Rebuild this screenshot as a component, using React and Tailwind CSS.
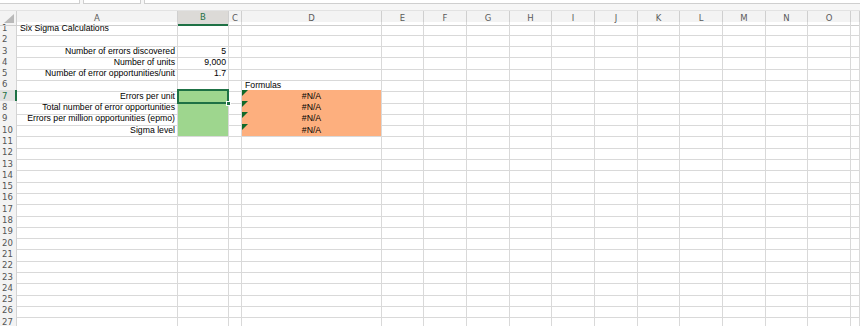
import React from 'react';

const COLS = ['A', 'B', 'C', 'D', 'E', 'F', 'G', 'H', 'I', 'J', 'K', 'L', 'M', 'N', 'O', 'P'];
const GRID = 'grid grid-cols-[17px_161px_51px_13px_140px_42px_43px_43px_42px_43px_43px_42px_43px_43px_42px_43px_1fr]';

const labels = {
    1: { A: { text: 'Six Sigma Calculations', align: 'left' } },
    3: { A: { text: 'Number of errors discovered' }, B: { text: '5' } },
    4: { A: { text: 'Number of units' }, B: { text: '9,000' } },
    5: { A: { text: 'Number of error opportunities/unit' }, B: { text: '1.7' } },
    6: { D: { text: 'Formulas', align: 'left' } },
    7: { A: { text: 'Errors per unit' }, D: { text: '#N/A', align: 'center' } },
    8: { A: { text: 'Total number of error opportunities' }, D: { text: '#N/A', align: 'center' } },
    9: { A: { text: 'Errors per million opportunities (epmo)' }, D: { text: '#N/A', align: 'center' } },
    10: { A: { text: 'Sigma level' }, D: { text: '#N/A', align: 'center' } },
};

function Cell({ row, col }) {
    const data = labels[row]?.[col];
    const green = col === 'B' && row >= 7 && row <= 10;
    const orange = col === 'D' && row >= 7 && row <= 10;
    const selected = col === 'B' && row === 7;
    const align = data?.align === 'left' ? 'justify-start pl-[3px]' : data?.align === 'center' ? 'justify-center' : 'justify-end pr-[2px]';

    let bg = 'border-r border-b border-[#d9d9d9]';
    if (green) bg = 'bg-[#9ed68e] border-r border-r-[#d9d9d9] border-b border-b-[#9ed68e]';
    if (orange) bg = 'bg-[#fdaf7e] border-r border-r-[#d9d9d9] border-b border-b-[#fdaf7e]';
    if (row === 10 && (green || orange)) bg = bg.replace(/border-b-\[#[0-9a-f]+\]/, 'border-b-[#d9d9d9]');

    return (
        <div className={`relative flex items-center ${align} ${bg} whitespace-nowrap overflow-visible`}>
            {orange && (
                <svg className="absolute left-0 top-0" width="6" height="6" viewBox="0 0 6 6">
                    <polygon points="0,0 6,0 0,6" fill="#11692a" />
                </svg>
            )}
            {data && <span className="relative z-10 leading-none">{data.text}</span>}
            {selected && (
                <>
                    <div className="absolute -left-px -top-px -right-px -bottom-px border-2 border-[#1e7145] z-20" />
                    <div className="absolute -right-[3px] -bottom-[3px] w-[5px] h-[5px] bg-[#1e7145] border border-white z-30" />
                </>
            )}
        </div>
    );
}

export default function App() {
    const rows = Array.from({ length: 28 }, (_, i) => i + 1);

    return (
        <div className="w-[860px] h-[326px] overflow-hidden bg-white font-['Liberation_Sans',Arial,sans-serif] text-[8.7px] text-black">
            {/* Toolbar remnant */}
            <div className="h-[10px] bg-[#f6f6f6] relative">
                <div className="flex h-[4px] gap-[3px]">
                    <div className="w-[80px] bg-white border-b border-r border-[#cfcfcf]" />
                    <div className="w-[58px] bg-white border-b border-x border-[#cfcfcf]" />
                    <div className="flex-1 bg-white border-b border-l border-[#cfcfcf]" />
                </div>
            </div>

            {/* Column headers */}
            <div className={`${GRID} h-[12px] bg-[#f3f3f3] border-t border-[#e2e2e2] font-['DejaVu_Sans',sans-serif] text-[8.5px] text-[#5a5a5a]`}>
                <div className="relative border-r border-b border-[#cfcfcf]">
                    <svg className="absolute right-[2px] bottom-[2px]" width="10" height="9" viewBox="0 0 10 9">
                        <polygon points="10,0 10,9 0,9" fill="#b9b9b9" />
                    </svg>
                </div>
                {COLS.map(c => (
                    <div
                        key={c}
                        className={c === 'B'
                            ? 'flex items-center justify-center bg-[#dcdad7] text-[#1e7145] border-r border-[#cfcfcf] border-b-2 border-b-[#1e7145]'
                            : 'flex items-center justify-center border-r border-b border-[#cfcfcf]'}
                    >
                        {c === 'P' ? '' : c}
                    </div>
                ))}
            </div>

            {/* Rows */}
            {rows.map(r => (
                <div key={r} className={`${GRID} h-[11.3px]`}>
                    <div
                        className={r === 7
                            ? 'flex items-center pl-[2px] bg-[#e1e1e1] text-[#1e7145] border-r-2 border-r-[#1e7145] border-b border-b-[#d4d4d4] font-["DejaVu_Sans",sans-serif] text-[8.5px]'
                            : 'flex items-center pl-[2px] bg-[#f3f3f3] text-[#555] border-r border-b border-[#d4d4d4] font-["DejaVu_Sans",sans-serif] text-[8.5px]'}
                    >
                        {r}
                    </div>
                    {COLS.map(c => (
                        <Cell key={c} row={r} col={c} />
                    ))}
                </div>
            ))}
        </div>
    );
}
